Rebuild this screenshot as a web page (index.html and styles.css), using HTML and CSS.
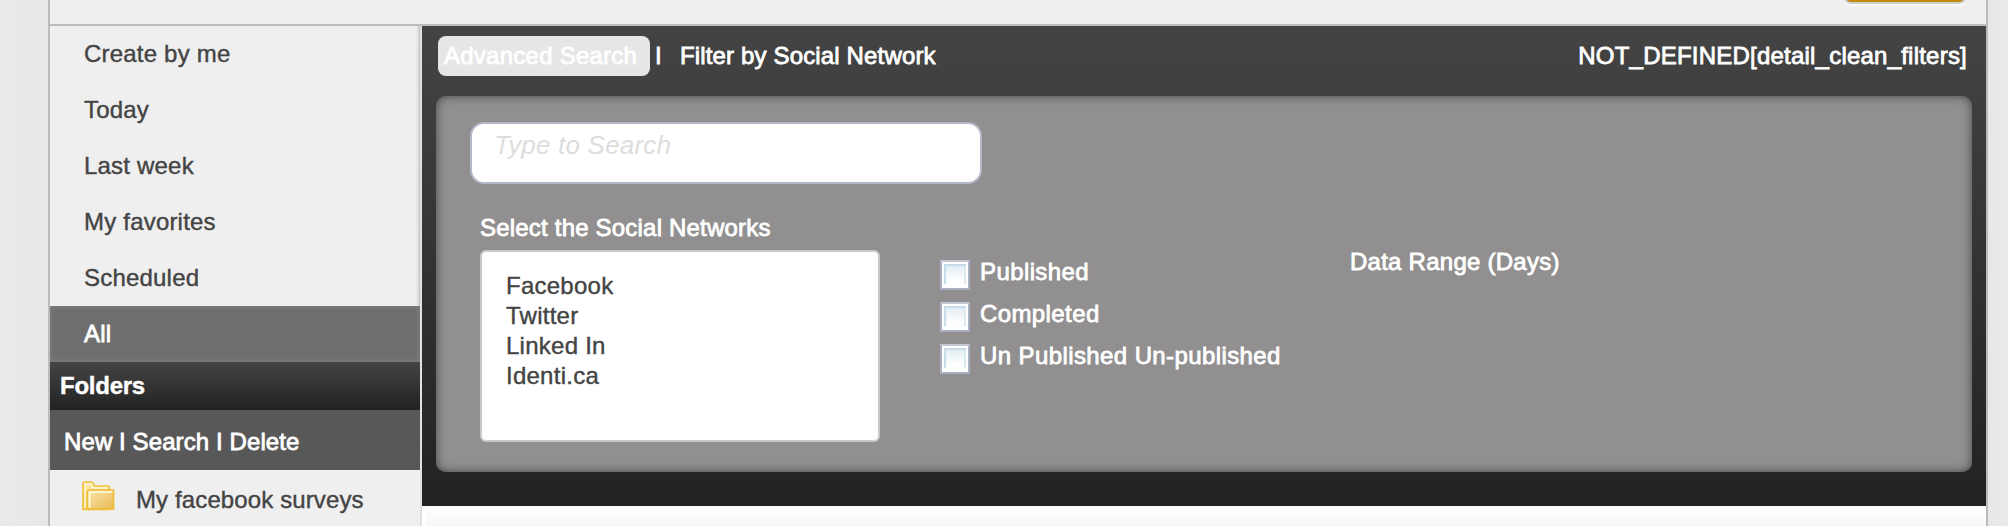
FILE: index.html
```html
<!DOCTYPE html>
<html lang="en">
<head>
<meta charset="utf-8">
<title>Surveys</title>
<link rel="stylesheet" href="styles.css">
</head>
<body>
<div class="page">
  <header class="topbar"><div class="button-edge"></div></header>
  <div class="columns">
    <nav class="sidebar">
      <ul class="filters">
        <li>Create by me</li>
        <li>Today</li>
        <li>Last week</li>
        <li>My favorites</li>
        <li>Scheduled</li>
        <li class="active">All</li>
      </ul>
      <h2 class="folders-title">Folders</h2>
      <div class="folder-actions">New I Search I Delete</div>
      <div class="folder">
        <svg class="folder-icon" width="33" height="30" viewBox="0 0 33 30">
          <defs>
            <linearGradient id="back" x1="0" y1="0" x2="0" y2="1"><stop offset="0" stop-color="#fbe9ae"/><stop offset="1" stop-color="#f6cf62"/></linearGradient>
            <linearGradient id="front" x1="0" y1="0" x2="1" y2="1"><stop offset="0" stop-color="#fbe8ab"/><stop offset="1" stop-color="#e8b755"/></linearGradient>
          </defs>
          <path d="M1 28.500V2.500Q1 1 2.500 1H9.500Q11 1 11.500 3L12.500 5H26Q27.500 5 27.500 7V28.500Z" fill="url(#back)" stroke="#efc13c" stroke-width="1.700"/>
          <path d="M3 27V3H9.500L11 7H26" fill="none" stroke="#fff6d6" stroke-width="1.500"/>
          <path d="M5.500 28V11Q5.500 9 7.500 9H31.500V28Z" fill="url(#front)" stroke="#efbd35" stroke-width="1.700"/>
          <path d="M7.500 26.500V11H30.500" fill="none" stroke="#fffbe9" stroke-width="1.700"/>
        </svg>
        <span>My facebook surveys</span>
      </div>
    </nav>
    <main class="main">
      <section class="search">
        <div class="tabs">
          <span class="tab tab-active">Advanced Search</span>
          <span class="divider">I</span>
          <span class="tab-link">Filter by Social Network</span>
          <span class="clean">NOT_DEFINED[detail_clean_filters]</span>
        </div>
        <div class="panel">
          <div class="query">Type to Search</div>
          <div class="options">
            <div class="networks">
              <div class="networks-label">Select the Social Networks</div>
              <ul class="network-list">
                <li>Facebook</li>
                <li>Twitter</li>
                <li>Linked In</li>
                <li>Identi.ca</li>
              </ul>
            </div>
            <div class="checks">
              <div class="check"><i class="box"></i><span>Published</span></div>
              <div class="check"><i class="box"></i><span>Completed</span></div>
              <div class="check"><i class="box"></i><span>Un Published Un-published</span></div>
            </div>
            <div class="range">Data Range (Days)</div>
          </div>
        </div>
      </section>
      <div class="results"></div>
    </main>
  </div>
</div>
</body>
</html>
```
FILE: styles.css
```css
* { box-sizing: border-box; }
body {
  margin: 0;
  height: 526px;
  overflow: hidden;
  background: linear-gradient(90deg, #eaeaea 0, #e7e7e7 48px, #e7e7e7 1988px, #eaeaea 2008px);
  font: 24px/28px "Liberation Sans", Arial, sans-serif;
  color: #444;
  white-space: nowrap;
  -webkit-text-stroke: 0.4px currentColor;
}
ul { list-style: none; margin: 0; padding: 0; }
.page {
  width: 1940px;
  height: 526px;
  margin-left: 48px;
  border: solid #bbb;
  border-width: 0 2px;
  background: #efefef;
}
.topbar {
  display: flex;
  justify-content: flex-end;
  height: 26px;
  padding-right: 21px;
  border-bottom: 2px solid #bbb;
}
.button-edge {
  width: 120px;
  height: 4px;
  border: 2px solid #ccc;
  border-top: 0;
  border-radius: 0 0 8px 8px / 0 0 4px 4px;
  background: #c4890f;
  box-shadow: 0 2px 0 #f8f8f8;
}
.columns { display: flex; height: 500px; }
.sidebar {
  width: 372px;
  border-right: 2px solid #e1e1e1;
}
.filters {
  background: linear-gradient(90deg, #efefef 365px, #e2e2e2 368px, #bcbcbc 370px);
  letter-spacing: 0.2px;
}
.filters li { height: 56px; padding-left: 34px; line-height: 56px; }
.filters .active {
  background: #6e6e6e;
  box-shadow: inset 0 0 6px #858585;
  color: #fff;
  -webkit-text-stroke-width: 0.8px;
}
.folders-title {
  height: 48px;
  margin: 0;
  padding-left: 10px;
  background: linear-gradient(#444, #222);
  color: #fff;
  font-size: 24px;
  line-height: 48px;
  letter-spacing: -0.25px;
}
.folder-actions {
  height: 60px;
  padding: 2px 0 0 14px;
  background: #585858;
  color: #fff;
  line-height: 60px;
  letter-spacing: 0.1px;
  -webkit-text-stroke-width: 0.8px;
}
.folder { display: flex; gap: 21px; height: 56px; padding: 11px 0 0 32px; letter-spacing: 0.12px; }
.folder span { padding-top: 5px; }
.main { flex: 1; }
.search {
  height: 480px;
  padding: 10px 14px 34px;
  background: linear-gradient(#444, #222);
  color: #fff;
  -webkit-text-stroke-width: 0.8px;
}
.tabs {
  display: flex;
  height: 60px;
  padding: 0 5px 0 2px;
  line-height: 40px;
}
.tab-active {
  width: 212px;
  height: 40px;
  padding-left: 6px;
  border-radius: 8px;
  background: #e6e6e6;
  letter-spacing: 0.25px;
}
.divider { width: 25px; margin-left: 5px; }
.tab-link { letter-spacing: 0.15px; }
.clean { margin-left: auto; letter-spacing: 0.22px; }
.panel {
  height: 376px;
  padding: 26px 34px;
  border-radius: 10px;
  background: #918f8f;
  box-shadow: inset 0 0 10px #444;
}
.query {
  width: 512px;
  height: 62px;
  padding: 6px 0 0 22px;
  border: 2px solid #b2b8c8;
  border-radius: 14px;
  background: #fff;
  color: #ddd;
  font-size: 26px;
  font-style: italic;
  line-height: 30px;
  letter-spacing: 0.2px;
  -webkit-text-stroke-width: 0;
}
.options { display: flex; padding: 30px 0 0 10px; }
.networks { width: 400px; }
.networks-label { height: 36px; letter-spacing: 0.2px; }
.network-list {
  height: 192px;
  padding: 19px 24px;
  border: 2px solid #c9c9c9;
  border-radius: 6px;
  background: #fff;
  color: #444;
  line-height: 30px;
  letter-spacing: 0.25px;
  -webkit-text-stroke-width: 0.4px;
}
.checks { width: 410px; margin-left: 60px; padding-top: 46px; }
.check { display: flex; gap: 10px; height: 42px; }
.check span { line-height: 24px; letter-spacing: 0.4px; }
.box {
  width: 30px;
  height: 30px;
  padding: 2px;
  border: 2px solid #a7afc3;
  border-top-color: #c3c8d4;
  background: #fff;
}
.box::before {
  content: "";
  display: block;
  width: 22px;
  height: 20px;
  background: linear-gradient(#dfebf3, #fff 85%);
  box-shadow: inset 2px 2px 1px #c5dce8, inset -2px 0 1px #dbe8f0;
}
.range { padding-top: 34px; letter-spacing: 0.25px; }
.results {
  height: 20px;
  margin-left: 4px;
  background: linear-gradient(#fff, #f7f7f7);
  box-shadow: -4px 0 0 #fff;
}
```
